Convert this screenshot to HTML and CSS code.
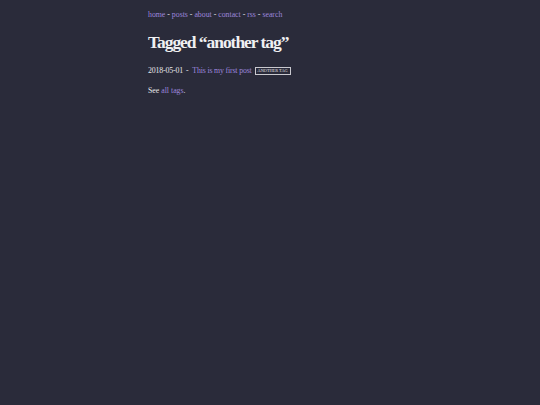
FILE: index.html
```html
<!DOCTYPE html>
<html>
<head>
<meta charset="utf-8">
<link rel="stylesheet" href="styles.css">
</head>
<body>
<div class="page">
  <nav class="nav">
    <a href="#">home</a> - <a href="#">posts</a> - <a href="#">about</a> - <a href="#">contact</a> - <a href="#">rss</a> - <a href="#">search</a>
  </nav>
  <h1 class="title">Tagged “another tag”</h1>
  <div class="post">
    <span class="date">2018-05-01</span><span class="sep">-</span><a href="#">This is my first post</a><span class="tag">another tag</span>
  </div>
  <p class="see">See <a href="#">all tags</a>.</p>
</div>
</body>
</html>
```
FILE: styles.css
```css
html, body {
  margin: 0;
  padding: 0;
  background: #2a2b3a;
}
body {
  font-family: "Liberation Serif", "Times New Roman", serif;
  font-size: 7.8px;
  color: #e6e6ea;
}
a {
  color: #9d87dc;
  text-decoration: none;
}
.page {
  width: 244px;
  margin: 0 auto;
  padding-top: 10px;
}
.nav {
  line-height: 10px;
}
.title {
  font-size: 17.5px;
  font-weight: bold;
  letter-spacing: -1.05px;
  margin: 12px 0 0 0;
  line-height: 20px;
  color: #f0f0f2;
}
.post {
  margin-top: 14px;
  line-height: 10px;
  letter-spacing: -0.15px;
}
.sep {
  margin: 0 4px 0 3px;
}
.tag {
  display: inline-block;
  margin-left: 3px;
  border: 1px solid #c9c9cf;
  font-size: 4.3px;
  letter-spacing: 0;
  text-transform: uppercase;
  line-height: 6px;
  padding: 0 2px;
  vertical-align: 1px;
}
.see {
  margin: 10px 0 0 0;
  line-height: 10px;
}
```
